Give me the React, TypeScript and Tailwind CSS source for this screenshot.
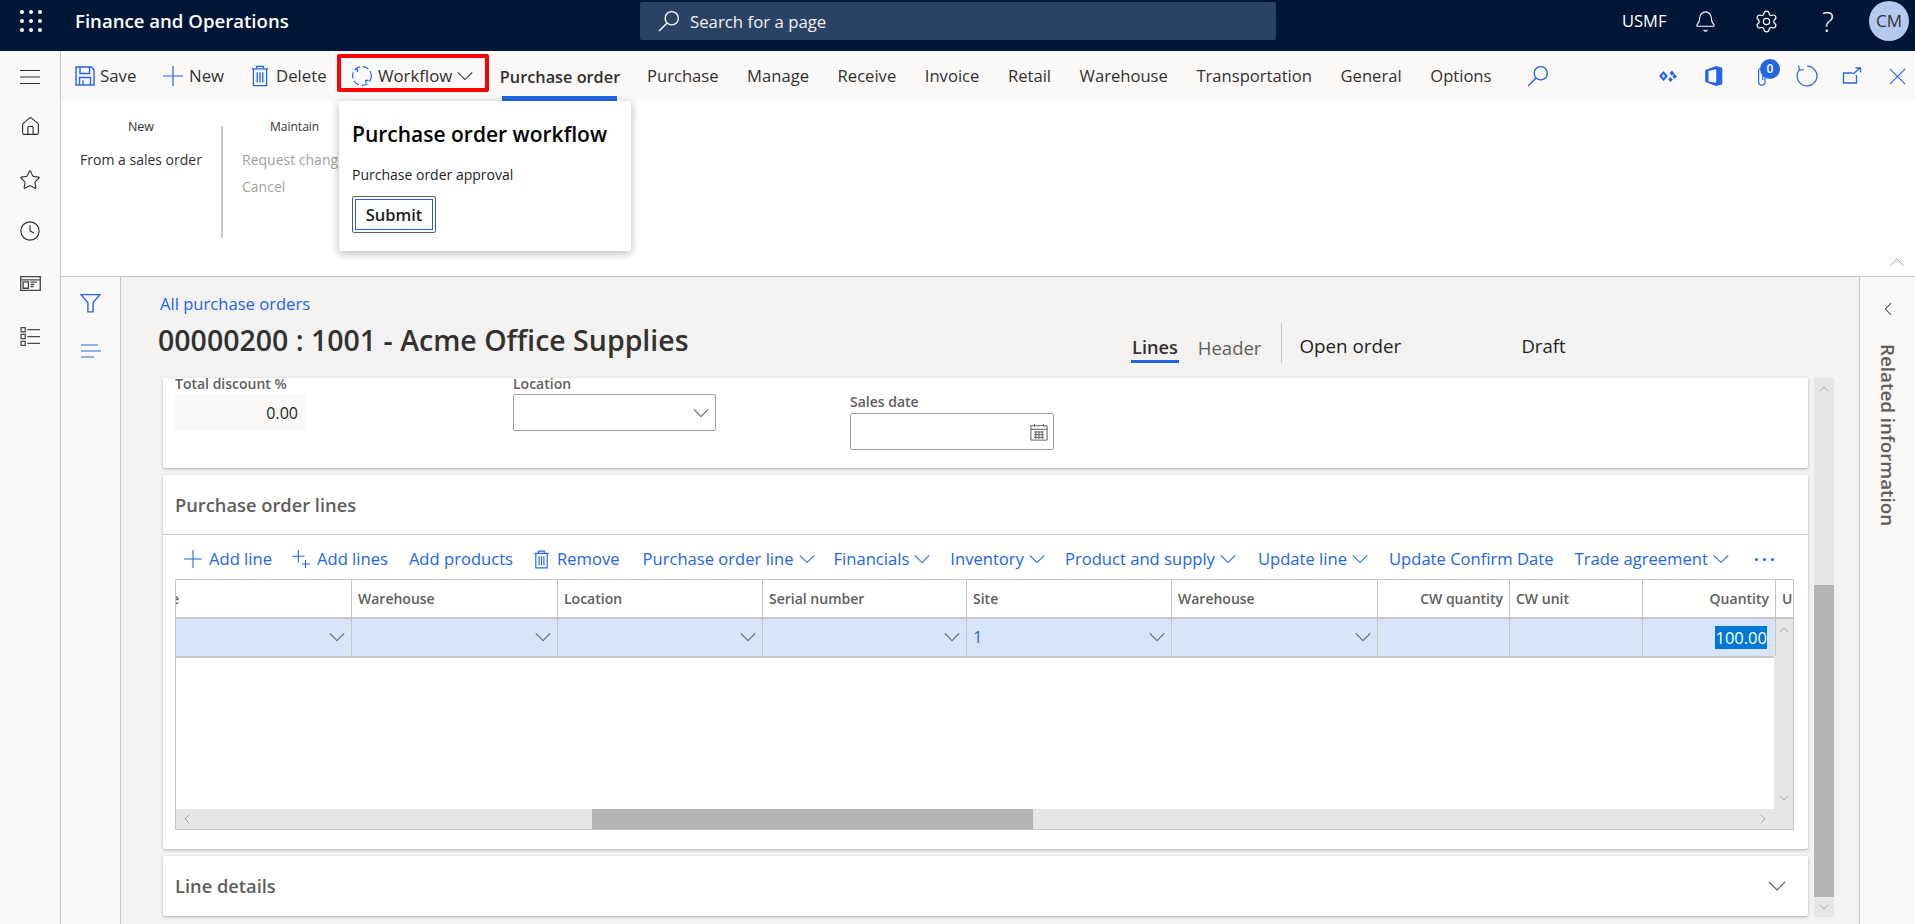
import React from "react";
import { Bell, Home, Star, Clock, Settings, ChevronDown, ChevronUp, ChevronLeft, ChevronRight } from "lucide-react";

const B = "#2266e3";

function Svg({ s = 20, children, className = "", c = "currentColor", w = 1.2 }: any) {
  return (
    <svg width={s} height={s} viewBox="0 0 20 20" fill="none" stroke={c} strokeWidth={w} className={"shrink-0 " + className}>
      {children}
    </svg>
  );
}
const Plus = () => (
  <Svg s={20} c={B}><path d="M10 0v20M0 10h20" /></Svg>
);
const Trash = ({ s = 20, className = "" }: any) => (
  <Svg s={s} c={B} w={1.2} className={className}><path d="M2.5 3.500h15M7 3.500V1.200h6v2.300M4 3.500v15.300h12V3.500M7.500 6.500v9.500M10 6.500v9.500M12.500 6.500v9.500" /></Svg>
);
const Save = () => (
  <Svg s={20} c={B} w={1.4}><path d="M1 1h15.500L19 3.500V19H1zM5 1v6.500h9.500V1M4.500 19v-7.500h11V19M8 14.500v4.500" /></Svg>
);
const Workflow = () => (
  <Svg s={22} c={B} w={1.1}>
    <circle cx="10" cy="10" r="8.500" strokeDasharray="5.500 2.600" />
    <path d="M3.500 3.500l2.500.3-.3 2.600M16 14l-2.600-.1.1 2.600" />
  </Svg>
);
const Search = ({ c, s = 22, className = "" }: any) => (
  <Svg s={s} c={c} w={1.3} className={className}><circle cx="12.500" cy="7.500" r="6" /><path d="M8.200 11.800L1 19" /></Svg>
);
const Chev = ({ c = "#323130", s = 16, className = "" }: any) => (
  <Svg s={s} c={c} w={1.15} className={className}><path d="M2 6l8 8 8-8" /></Svg>
);

function Top() {
  return (
    <header className="h-[51px] shrink-0 bg-[#001636] flex items-center pb-[9px] text-white">
      <div className="w-[75px] shrink-0 flex justify-center pr-[13px]">
        <div className="grid grid-cols-3 gap-[5px]">
          {Array.from({ length: 9 }).map((_, i) => (
            <span key={i} className="w-[4px] h-[4px] rounded-full bg-white" />
          ))}
        </div>
      </div>
      <div className="w-[565px] shrink-0 text-[18.600px] font-semibold whitespace-nowrap">Finance and Operations</div>
      <div className="w-[636px] shrink-0 h-[38px] bg-[#2a4365] rounded-[2px] flex items-center pl-[18px] gap-[10px]">
        <Search c="#fff" s={22} />
        <span className="mt-[1px] text-[16.800px] text-[#f3f2f1]">Search for a page</span>
      </div>
      <div className="flex-1" />
      <span className="text-[16.500px] w-[46px]">USMF</span>
      <Bell size={23} strokeWidth={1.15} className="ml-[26px]" />
      <Settings size={25} strokeWidth={1.15} className="ml-[37px]" />
      <span className="ml-[43px] w-[14px] text-[28px] font-light leading-none">?</span>
      <div className="ml-[33px] mr-[6px] w-[40px] h-[40px] rounded-full bg-[#b4c9f1] flex items-center justify-center text-[#323130] text-[17px]">CM</div>
    </header>
  );
}

function LeftNav() {
  return (
    <nav className="w-[61px] shrink-0 bg-[#faf9f8] border-r border-[#c8c6c4] flex flex-col items-center text-[#323130]">
      <Svg s={20} className="mt-[16px]" w={1.1}><path d="M0 3.500h20M0 10h20M0 16.500h20" /></Svg>
      <Home size={21} strokeWidth={1.3} className="mt-[29px]" />
      <Star size={22} strokeWidth={1.25} className="mt-[32px]" />
      <Clock size={22} strokeWidth={1.25} className="mt-[29px]" />
      <Svg s={21} className="mt-[31px]" w={1.3} c="#4a4846">
        <path d="M.7 3.500h18.600v13H.7zM.7 6.500h18.600M3 8.500h5v6H3zM10 8.700h6M10 11h3.500M10 13h3" />
      </Svg>
      <Svg s={21} className="mt-[31px]" w={1.2} c="#4a4846">
        <path d="M1 2.500h4v4H1zM1 9h4v4H1zM1 15.500h4v4H1zM7 4.500h12M7 11h12M7 17.500h12" />
      </Svg>
    </nav>
  );
}

function CmdBar() {
  return (
    <div className="h-[50px] shrink-0 bg-[#faf9f8] flex items-center text-[#323130] text-[16.800px] pl-[14px] whitespace-nowrap">
      <Save /><span className="ml-[5px] w-[63px]">Save</span>
      <Plus /><span className="ml-[6px] w-[60px]">New</span>
      <Trash s={22} /><span className="ml-[5px] w-[75px]">Delete</span>
      <Workflow /><span className="ml-[5px] w-[78px]">Workflow</span>
      <Chev s={18} />
      <div className="ml-[26px] w-[120px] h-full flex flex-col items-center justify-center relative font-semibold text-[16.300px]">
        <span className="mt-[2px]">Purchase order</span>
        <span className="absolute left-[2px] right-[3px] bottom-0 h-[5px] bg-[#2266e3]" />
      </div>
      <div className="ml-[27px] flex gap-[28.600px] font-medium text-[16.600px]">
        <span>Purchase</span><span>Manage</span><span>Receive</span><span>Invoice</span><span>Retail</span>
        <span>Warehouse</span><span>Transportation</span><span>General</span><span>Options</span>
      </div>
      <Search c={B} s={22} className="ml-[36px]" />
      <div className="flex-1" />
      <Svg s={20} c={B} w={0}><path fill={B} d="M5.500 5l4.500 5-4.500 5L1 10zM5.500 8L4 10l1.500 2L7 10zM14 4.500l2.400 2.700L14 10l-2.400-2.800zM16.500 8l2.500 2.500-2.500 2.500-2-2.500zM12.500 11l2.400 2.400-2.400 2.600-2.300-2.600z" /></Svg>
      <Svg s={22} c={B} w={0} className="ml-[25px]"><path fill={B} d="M2 4.500L12 1l5.500 1.500v15L12 19 2 15.500zM12 3.800L5 5.500v9.500l7 1.200z" fillRule="evenodd" /></Svg>
      <div className="relative ml-[27px] w-[20px] h-[20px]">
        <Svg s={20} c={B} w={1.2}><path d="M13 6v10a3.200 3.200 0 0 1-6.400 0V4.500a2 2 0 0 1 4 0V14" /></Svg>
        <span className="absolute left-[8px] top-[-7px] w-[20px] h-[20px] rounded-full bg-[#2266e3] text-white text-[12px] font-semibold flex items-center justify-center">0</span>
      </div>
      <Svg s={22} c={B} w={1.1} className="ml-[24px]"><path d="M10 1a9 9 0 1 1-7 3.400M2.500 .5L3 4.700l4.200-.4" /></Svg>
      <Svg s={20} c={B} w={1.3} className="ml-[24px]"><path d="M14.500 9v8H1.500V7h9M11 8l7-6M13.500 1.800H18.500V6.500" /></Svg>
      <Svg s={17} c={B} w={1.3} className="ml-[27px] mr-[9px]"><path d="M1 1l18 18M19 1L1 19" /></Svg>
    </div>
  );
}

function Ribbon() {
  return (
    <div className="h-[176px] shrink-0 bg-white border-b border-[#c8c6c4] flex text-[14px] relative">
      <div className="w-[160px] flex flex-col items-center pt-[17px]">
        <span className="text-[12.500px] text-[#323130]">New</span>
        <span className="mt-[12px] text-[#323130] whitespace-nowrap">From a sales order</span>
      </div>
      <div className="w-[2px] h-[112px] mt-[25px] bg-[#c8c6c4]" />
      <div className="pl-[19px] flex flex-col pt-[17px] text-[#a19f9d] whitespace-nowrap">
        <span className="text-[12px] text-[#323130] ml-[28px]">Maintain</span>
        <span className="mt-[13px]">Request change</span>
        <span className="mt-[6px]">Cancel</span>
      </div>
      <ChevronUp size={24} strokeWidth={1} color="#a19f9d" className="absolute right-[6px] bottom-[2px]" />
    </div>
  );
}

const gridCols = [
  { w: "w-[176px]", h: "e", clip: true, chev: true },
  { w: "w-[206px]", h: "Warehouse", chev: true },
  { w: "w-[205px]", h: "Location", chev: true },
  { w: "w-[204px]", h: "Serial number", chev: true },
  { w: "w-[205px]", h: "Site", chev: true, v: "1" },
  { w: "w-[206px]", h: "Warehouse", chev: true },
  { w: "w-[132px]", h: "CW quantity", right: true },
  { w: "w-[133px]", h: "CW unit" },
  { w: "w-[133px]", h: "Quantity", right: true, q: true },
];

function Grid() {
  return (
    <div className="ml-[12px] mr-[14px] h-[251px] border border-[#c8c6c4] flex flex-col overflow-hidden">
      <div className="h-[39px] shrink-0 flex border-b-2 border-[#c8c6c4] text-[14px] font-semibold text-[#605e5c] whitespace-nowrap">
        {gridCols.map((c, i) => (
          <div
            key={i}
            className={
              c.w +
              " shrink-0 h-full border-r border-[#c8c6c4] flex items-center overflow-hidden " +
              (c.right ? "justify-end pr-[6px]" : c.clip ? "" : "pl-[6px]")
            }
          >
            <span className={c.clip ? "-ml-[5px]" : ""}>{c.h}</span>
          </div>
        ))}
        <div className="flex-1 pl-[6px] flex items-center overflow-hidden">Unit</div>
      </div>
      <div className="flex-1 flex min-h-0">
        <div className="w-[1598px] shrink-0 bg-white">
          <div className="h-[39px] flex border-b-2 border-[#c8c6c4] bg-[#d7e4f9]">
            {gridCols.map((c, i) => (
              <div key={i} className={c.w + " shrink-0 h-full border-r border-[#c8c6c4] flex items-center relative"}>
                {c.v && <span className="pl-[6px] text-[16.500px] text-[#2266e3]">{c.v}</span>}
                {c.chev && <Chev s={18} c="#605e5c" className="absolute right-[5px] top-[9px]" />}
                {c.q && (
                  <span className="absolute right-[8px] top-[7px] h-[23px] bg-[#0078d4] text-white text-[16.500px] leading-[23px]">100.00</span>
                )}
              </div>
            ))}
          </div>
        </div>
        <div className="flex-1 bg-[#e6e6e6] flex flex-col items-center justify-between py-[3px]">
          <ChevronUp size={16} strokeWidth={1} color="#8a8886" />
          <ChevronDown size={16} strokeWidth={1} color="#8a8886" />
        </div>
      </div>
      <div className="h-[20px] shrink-0 flex bg-[#e6e6e6]">
        <div className="w-[416px] flex items-center pl-[3px]">
          <ChevronLeft size={16} strokeWidth={1} color="#8a8886" />
        </div>
        <div className="w-[441px] bg-[#b5b5b5]" />
        <div className="flex-1 flex items-center justify-end pr-[22px]">
          <ChevronRight size={16} strokeWidth={1} color="#8a8886" />
        </div>
      </div>
    </div>
  );
}

function GridBar() {
  const L = ({ children, className = "" }: any) => <span className={className}>{children}</span>;
  return (
    <div className="h-[44px] shrink-0 flex items-center pl-[21px] pt-[4px] text-[16.600px] text-[#2266e3] whitespace-nowrap">
      <Svg s={18} c={B}><path d="M10 0v20M0 10h20" /></Svg>
      <L className="ml-[7px]">Add line</L>
      <Svg s={18} c={B} className="ml-[20px]"><path d="M7 0v14M0 7h14M15 11v9M11 15.500h9" /></Svg>
      <L className="ml-[7px]">Add lines</L>
      <L className="ml-[21px]">Add products</L>
      <Trash s={19} className="ml-[19px]" />
      <L className="ml-[6px]">Remove</L>
      <L className="ml-[23px]">Purchase order line</L>
      <Chev c={B} s={18} className="ml-[4px]" />
      <L className="ml-[18px]">Financials</L>
      <Chev c={B} s={18} className="ml-[4px]" />
      <L className="ml-[19px]">Inventory</L>
      <Chev c={B} s={18} className="ml-[4px]" />
      <L className="ml-[19px]">Product and supply</L>
      <Chev c={B} s={18} className="ml-[4px]" />
      <L className="ml-[21px]">Update line</L>
      <Chev c={B} s={18} className="ml-[4px]" />
      <L className="ml-[20px]">Update Confirm Date</L>
      <L className="ml-[21px]">Trade agreement</L>
      <Chev c={B} s={18} className="ml-[4px]" />
      <span className="ml-[25px] flex gap-[5px]">
        <i className="w-[3px] h-[3px] rounded-full bg-[#2266e3]" />
        <i className="w-[3px] h-[3px] rounded-full bg-[#2266e3]" />
        <i className="w-[3px] h-[3px] rounded-full bg-[#2266e3]" />
      </span>
    </div>
  );
}

function Form() {
  return (
    <div className="flex-1 flex min-h-0 pl-[42px] pr-[25px] pb-[7px]">
      <div className="w-[1645px] shrink-0 mr-[6px] flex flex-col gap-[7px]">
        <div className="h-[90px] shrink-0 bg-white rounded-b-[2px] shadow-[0_1px_3px_rgba(0,0,0,0.28)] flex pl-[12px] text-[14px] font-semibold text-[#605e5c]">
          <div className="w-[338px]">
            <div className="h-[16px] leading-[11px]">Total discount %</div>
            <div className="w-[131px] h-[37px] bg-[#faf9f8] flex items-center justify-end pr-[8px] text-[16px] font-normal text-[#201f1e]">0.00</div>
          </div>
          <div className="w-[337px]">
            <div className="h-[16px] leading-[11px]">Location</div>
            <div className="w-[203px] h-[37px] bg-white border border-[#a19f9d] rounded-[2px] flex items-center justify-end pr-[5px]">
              <Chev s={18} c="#605e5c" />
            </div>
          </div>
          <div className="pt-[18px]">
            <div className="h-[17px] leading-[11px]">Sales date</div>
            <div className="w-[204px] h-[37px] bg-white border border-[#a19f9d] rounded-[2px] flex items-center justify-end pr-[5px]">
              <Svg s={18} c="#605e5c" w={1.1}><path d="M1 3h18v16H1zM1 7h18M5 1v3M15 1v3M4.500 10h11M4.500 13h11M4.500 16h11M6.500 9v8.500M10 9v8.500M13.500 9v8.500" /></Svg>
            </div>
          </div>
        </div>
        <div className="h-[374px] shrink-0 bg-white rounded-[2px] shadow-[0_1px_3px_rgba(0,0,0,0.28)] flex flex-col">
          <div className="h-[60px] shrink-0 flex items-center pl-[12px] border-b border-[#c8c6c4] text-[18.300px] font-semibold text-[#605e5c]">Purchase order lines</div>
          <GridBar />
          <Grid />
        </div>
        <div className="h-[60px] shrink-0 bg-white rounded-[2px] shadow-[0_1px_3px_rgba(0,0,0,0.28)] flex items-center justify-between pl-[12px] pr-[21px] text-[18.300px] font-semibold text-[#605e5c]">
          <span>Line details</span>
          <Chev s={20} c="#605e5c" />
        </div>
      </div>
      <div className="w-[20px] shrink-0 bg-[#e6e6e6] flex flex-col items-center">
        <ChevronUp size={16} strokeWidth={1} color="#8a8886" className="mt-[3px]" />
        <div className="w-full h-[312px] mt-[188px] bg-[#b5b5b5]" />
        <ChevronDown size={16} strokeWidth={1} color="#8a8886" className="mt-[2px]" />
      </div>
    </div>
  );
}

function Content() {
  return (
    <div className="flex-1 min-w-0 flex flex-col bg-[#f3f2f1]">
      <div className="h-[101px] shrink-0 flex text-[#323130] whitespace-nowrap">
        <div className="w-[1011px] shrink-0 pl-[37px] pt-[14px]">
          <div className="pl-[2px] text-[16.600px] text-[#2266e3] leading-[26px]">All purchase orders</div>
          <div className="text-[28.500px] font-semibold leading-[36px] mt-[5px]">00000200 : 1001 - Acme Office Supplies</div>
        </div>
        <div className="flex items-start pt-[57px] text-[18.500px]">
          <div className="relative font-semibold text-[18.200px]"><span>Lines</span><span className="absolute left-[-1px] right-[-1px] top-[26px] h-[3px] bg-[#2266e3]" /></div>
          <span className="ml-[20px] text-[#605e5c]">Header</span>
          <span className="ml-[20px] w-[1px] h-[40px] -mt-[11px] bg-[#c8c6c4]" />
          <span className="ml-[17px] -mt-[2px] w-[222px] text-[18.800px] text-[#201f1e]">Open order</span>
          <span className="-mt-[2px] text-[#201f1e]">Draft</span>
        </div>
      </div>
      <Form />
    </div>
  );
}

export default function App() {
  return (
    <div className="relative w-[1915px] h-[924px] overflow-hidden flex flex-col bg-white font-['Open_Sans',sans-serif]">
      <Top />
      <div className="flex-1 flex min-h-0">
        <LeftNav />
        <div className="flex-1 min-w-0 flex flex-col">
          <CmdBar />
          <Ribbon />
          <div className="flex-1 min-h-0 flex">
            <div className="w-[60px] shrink-0 bg-[#faf9f8] border-r border-[#c8c6c4] flex flex-col items-center">
              <Svg s={21} c={B} w={1.3} className="mt-[16px]"><path d="M1 1.500h18L12.500 9v9h-5V9z" /></Svg>
              <Svg s={20} c={B} w={1.2} className="mt-[28px]"><path d="M0 3h17M0 9h20M0 15h13" /></Svg>
            </div>
            <Content />
            <div className="w-[56px] shrink-0 bg-[#faf9f8] border-l border-[#c8c6c4] flex flex-col items-center">
              <ChevronLeft size={22} strokeWidth={1.1} color="#323130" className="mt-[21px]" />
              <span className="mt-[24px] [writing-mode:vertical-rl] text-[18.800px] font-semibold text-[#605e5c] whitespace-nowrap">Related information</span>
            </div>
          </div>
        </div>
      </div>
      {/* dropdown flyout */}
      <div className="absolute left-[339px] top-[101px] w-[292px] h-[150px] bg-white rounded-[2px] shadow-[0_2px_8px_rgba(0,0,0,0.3)] pl-[13px] pt-[19px] text-[#201f1e] whitespace-nowrap">
        <div className="text-[21px] font-semibold text-black leading-[28px]">Purchase order workflow</div>
        <div className="mt-[17px] text-[14px] leading-[20px]">Purchase order approval</div>
        <div className="mt-[11px] w-[84px] h-[37px] border border-[#605e5c] rounded-[2px] p-[2px]">
          <div className="h-full pt-[1px] border border-[#2266e3] flex items-center justify-center text-[16.500px] font-semibold">Submit</div>
        </div>
      </div>
      {/* annotation */}
      <div className="absolute left-[337px] top-[54px] w-[152px] h-[38px] border-[4px] border-[#ff0000] rounded-[2px]" />
    </div>
  );
}
